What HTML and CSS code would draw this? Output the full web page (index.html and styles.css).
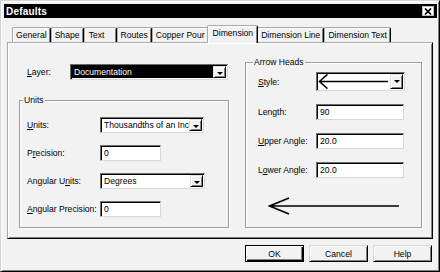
FILE: index.html
```html
<!DOCTYPE html>
<html>

<head>
    <meta charset="utf-8">
    <meta name="viewport" content="width=device-width,initial-scale=1.0">
    <title>Defaults</title>
    <link rel="stylesheet" href="styles.css">
</head>

<body>
    <div class="dialog">
        <div class="title-bar">
            <span class="title">Defaults</span>
            <span class="close-box">
                <svg width="8" height="7" viewBox="0 0 8 7">
                    <path d="M1 0.5 L7 6.5 M7 0.5 L1 6.5" stroke="#000" stroke-width="1.7" fill="none" />
                </svg>
            </span>
        </div>

        <div class="tabs">
            <div class="tab">General</div>
            <div class="tab">Shape</div>
            <div class="tab tab-wide">Text</div>
            <div class="tab">Routes</div>
            <div class="tab">Copper Pour</div>
            <div class="tab active">Dimension</div>
            <div class="tab">Dimension Line</div>
            <div class="tab">Dimension Text</div>
        </div>

        <div class="panel">
            <div class="left-col">
                <div class="layer-row">
                    <span class="label layer-label"><u>L</u>ayer:</span>
                    <div class="combo combo-layer highlighted">
                        <span class="combo-text">Documentation</span>
                        <span class="drop-btn"></span>
                    </div>
                </div>

                <fieldset class="group units-group">
                    <legend>Units</legend>
                    <div class="rows">
                        <div class="row">
                            <span class="label"><u>U</u>nits:</span>
                            <div class="combo combo-units">
                                <span class="combo-text">Thousandths of an Inch</span>
                                <span class="drop-btn"></span>
                            </div>
                        </div>
                        <div class="row">
                            <span class="label">P<u>r</u>ecision:</span>
                            <div class="field field-short">0</div>
                        </div>
                        <div class="row">
                            <span class="label">Angular U<u>n</u>its:</span>
                            <div class="combo combo-angular">
                                <span class="combo-text">Degrees</span>
                                <span class="drop-btn"></span>
                            </div>
                        </div>
                        <div class="row">
                            <span class="label"><u>A</u>ngular Precision:</span>
                            <div class="field field-short">0</div>
                        </div>
                    </div>
                </fieldset>
            </div>

            <fieldset class="group arrow-group">
                <legend>Arrow Heads</legend>
                <div class="rows arrow-rows">
                    <div class="row row-style">
                        <span class="label label-arrow"><u>S</u>tyle:</span>
                        <div class="combo combo-style">
                            <span class="combo-text">
                                <svg width="76" height="17" viewBox="0 0 76 17">
                                    <path d="M1 8.5 H74 M10 1 L1.5 8.5 L10 16" stroke="#000" stroke-width="1.6" fill="none" />
                                </svg>
                            </span>
                            <span class="drop-btn"></span>
                        </div>
                    </div>
                    <div class="row">
                        <span class="label label-arrow">Length:</span>
                        <div class="field field-long">90</div>
                    </div>
                    <div class="row">
                        <span class="label label-arrow"><u>U</u>pper Angle:</span>
                        <div class="field field-long">20.0</div>
                    </div>
                    <div class="row">
                        <span class="label label-arrow">L<u>o</u>wer Angle:</span>
                        <div class="field field-long">20.0</div>
                    </div>
                </div>
                <svg class="arrow-preview" width="132" height="18" viewBox="0 0 132 18">
                    <path d="M1 9 H131 M21 1 L1.5 9 L21 17" stroke="#000" stroke-width="1.6" fill="none" />
                </svg>
            </fieldset>
        </div>

        <div class="buttons">
            <button class="btn btn-default">OK</button>
            <button class="btn">Cancel</button>
            <button class="btn">Help</button>
        </div>
    </div>
</body>

</html>
```

FILE: styles.css
```css
* {
    box-sizing: border-box;
}

body {
    margin: 0;
    padding: 0;
    background: #fff;
    font-family: "Liberation Sans", Arial, sans-serif;
    font-size: 8.6px;
    color: #000;
}

.dialog {
    width: 440px;
    height: 272px;
    display: flex;
    flex-direction: column;
    padding: 3px 2px 0 3px;
    background: #f2f2f2;
    border: 1px solid;
    border-color: #d4d4d4 #000 #000 #d4d4d4;
    box-shadow: inset 1px 1px 0 #fff, inset -1px -1px 0 #808080;
}

/* title bar */

.title-bar {
    height: 14px;
    display: flex;
    align-items: center;
    justify-content: space-between;
    padding: 0 3px 0 2px;
    background: #000;
    color: #fff;
}

.title {
    font-size: 10px;
    font-weight: bold;
    letter-spacing: 0.2px;
}

.close-box {
    width: 12px;
    height: 10px;
    display: flex;
    align-items: center;
    justify-content: center;
    background: #fff;
    border: 1px solid #bbb;
}

/* tabs */

.tabs {
    height: 17px;
    margin-top: 7px;
    padding-left: 8px;
    display: flex;
    align-items: flex-end;
}

.tab {
    height: 15px;
    min-width: 33px;
    padding: 0 3px;
    line-height: 14px;
    text-align: center;
    white-space: nowrap;
    border: 1px solid;
    border-bottom: none;
    border-color: #a8a8a8 #000 transparent #a8a8a8;
    border-radius: 2px 2px 0 0;
    box-shadow: inset 1px 1px 0 #fff, inset -1px 0 0 #808080;
}

.tab-wide {
    padding-right: 10px;
}

.tab.active {
    position: relative;
    z-index: 1;
    height: 18px;
    margin: 0 -1px -1px -2px;
    padding: 0 4px 0 5px;
    line-height: 15px;
    background: #f2f2f2;
}

/* panel */

.panel {
    height: 197px;
    margin: 0 4px 0 3px;
    padding: 14px 10px 10px 11px;
    display: flex;
    gap: 16px;
    border: 1px solid;
    border-color: #a8a8a8 #000 #000 #a8a8a8;
    box-shadow: inset 1px 1px 0 #fff, inset -1px -1px 0 #808080;
}

.left-col {
    width: 210px;
    display: flex;
    flex-direction: column;
}

.layer-row {
    height: 16px;
    margin-top: 7px;
    padding-left: 8px;
    display: flex;
    align-items: center;
}

.group {
    margin: 0;
    min-width: 0;
    border: 1px solid #9c9c9c;
    box-shadow: inset 1px 1px 0 #fff, 1px 1px 0 #fff;
}

.group legend {
    height: 10px;
    line-height: 10px;
    padding: 0 1px;
}

.units-group {
    flex-grow: 1;
    margin-top: 15px;
    padding: 12px 7px 0 7px;
}

.units-group legend {
    margin-left: -4px;
}

.arrow-group {
    width: 177px;
    padding: 5px 12px 0 12px;
}

.arrow-group legend {
    margin-left: -5px;
}

.rows {
    display: flex;
    flex-direction: column;
    gap: 12px;
}

.arrow-rows {
    gap: 13px;
}

.row {
    height: 16px;
    display: flex;
    align-items: center;
}

.row-style {
    height: 19px;
}

.label {
    width: 73px;
    flex-shrink: 0;
    white-space: nowrap;
}

.label.layer-label {
    width: 43px;
}

.label.label-arrow {
    width: 58px;
}

/* inputs */

.field,
.combo {
    height: 16px;
    background: #fff;
    border: 1px solid;
    border-color: #6c6c6c #d8d8d8 #d8d8d8 #6c6c6c;
    box-shadow: inset 1px 1px 0 #000;
}

.field {
    padding: 0 0 0 3px;
    line-height: 14px;
}

.field-short {
    width: 61px;
}

.field-long {
    width: 88px;
}

.combo {
    display: flex;
    padding: 1px;
}

.combo-text {
    flex-grow: 1;
    overflow: hidden;
    white-space: nowrap;
    padding-left: 2px;
    line-height: 13px;
}

.highlighted .combo-text {
    background: #000;
    color: #fff;
}

.combo-layer {
    width: 158px;
}

.combo-units {
    width: 104px;
}

.combo-angular {
    width: 105px;
}

.combo-style {
    width: 89px;
    height: 19px;
}

.combo-style .combo-text {
    padding-left: 0;
    display: flex;
    align-items: center;
}

.drop-btn {
    width: 13px;
    flex-shrink: 0;
    position: relative;
    background: #f2f2f2;
    border: 1px solid;
    border-color: #e0e0e0 #000 #000 #e0e0e0;
    box-shadow: inset 1px 1px 0 #fff, inset -1px -1px 0 #808080;
}

.drop-btn::after {
    content: "";
    position: absolute;
    left: 3px;
    top: 5px;
    border-left: 3px solid transparent;
    border-right: 3px solid transparent;
    border-top: 3px solid #000;
}

.arrow-preview {
    display: block;
    margin: 19px 0 0 10px;
}

/* buttons */

.buttons {
    margin-top: 6px;
    padding-right: 5px;
    display: flex;
    justify-content: flex-end;
    gap: 5px;
}

.btn {
    width: 59px;
    height: 17px;
    padding: 0;
    font-family: inherit;
    font-size: 8.6px;
    color: #000;
    background: #f2f2f2;
    border: 1px solid;
    border-color: #d8d8d8 #000 #000 #d8d8d8;
    box-shadow: inset 1px 1px 0 #fff, inset -1px -1px 0 #808080;
}

.btn-default {
    border-color: #000;
    box-shadow: inset 1px 1px 0 #fff, inset -1px -1px 0 #000, inset -2px -2px 0 #808080;
}
```
